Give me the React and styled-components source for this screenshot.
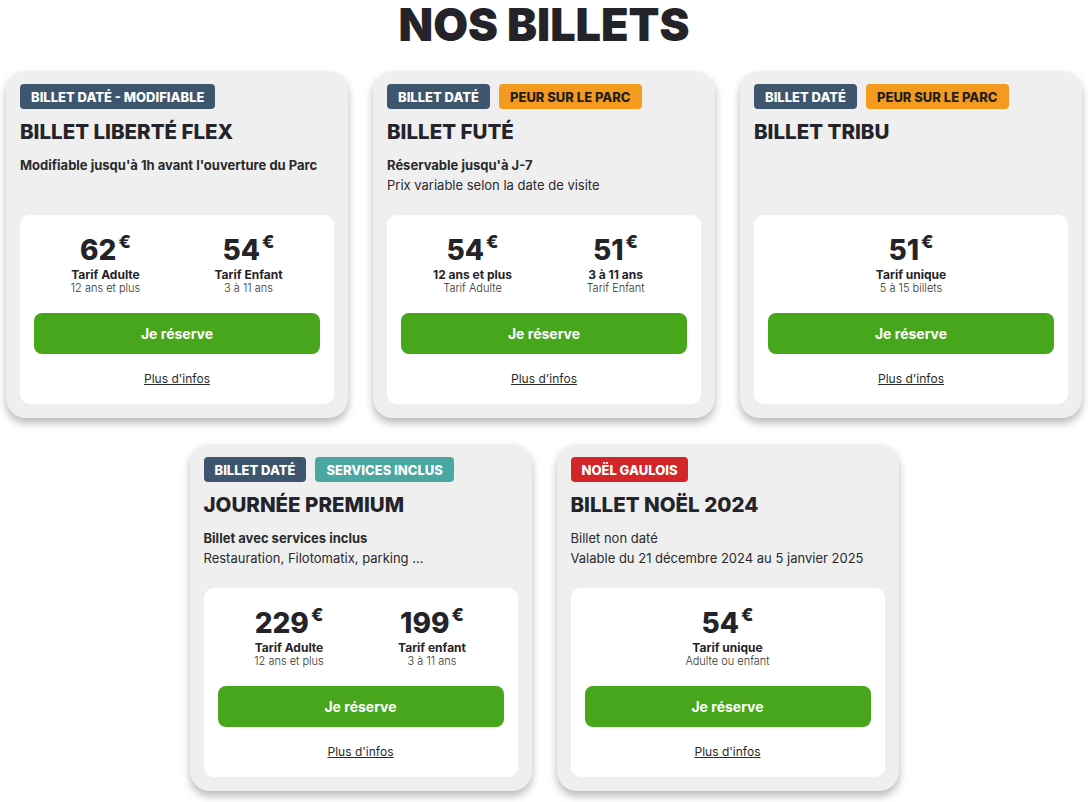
import React from "react";
import styled, { createGlobalStyle } from "styled-components";

const GlobalStyle = createGlobalStyle`
  body {
    margin: 0;
    background: #ffffff;
    font-family: "Inter", "Noto Sans", sans-serif;
    color: #25232a;
  }
`;

const badgeColors = {
  dark: { bg: "#3d566e", fg: "#ffffff" },
  orange: { bg: "#f39a1f", fg: "#1f1f1f" },
  teal: { bg: "#4aa7a2", fg: "#ffffff" },
  red: { bg: "#d3262a", fg: "#ffffff" },
};

const Page = styled.main`
  display: flex;
  flex-direction: column;
  align-items: center;
  padding-bottom: 20px;
`;

const Heading = styled.h1`
  margin: 0 0 21px;
  font-size: 45px;
  line-height: 50px;
  font-weight: 900;
  color: #25232a;
`;

const Row = styled.div`
  display: flex;
  justify-content: center;
  gap: 25px;
  margin-bottom: 26px;
`;

const Card = styled.article`
  width: 342px;
  height: 347px;
  box-sizing: border-box;
  padding: 13px 14px 14px;
  background: #efefef;
  border-radius: 20px;
  box-shadow: 0 5px 8px rgba(0, 0, 0, 0.28);
  display: flex;
  flex-direction: column;
`;

const Top = styled.div`
  flex: 1;
`;

const Badges = styled.div`
  display: flex;
  gap: 9px;
`;

const Badge = styled.span`
  height: 25px;
  display: inline-flex;
  align-items: center;
  padding: 0 11px;
  border-radius: 4px;
  font-size: 13px;
  font-weight: 800;
  text-transform: uppercase;
  background: ${(p) => badgeColors[p.$tone].bg};
  color: ${(p) => badgeColors[p.$tone].fg};
`;

const Title = styled.h2`
  margin: 10px 0 0;
  font-size: 20.5px;
  line-height: 26px;
  font-weight: 800;
  text-transform: uppercase;
  color: #25232a;
`;

const Desc = styled.div`
  margin-top: 10px;
  font-size: 13px;
  line-height: 20px;
  color: #2a2a2a;
`;

const DescStrong = styled.div`
  font-weight: 700;
`;

const Inner = styled.div`
  flex: none;
  height: 189px;
  box-sizing: border-box;
  background: #ffffff;
  border-radius: 10px;
  padding: 18px 14px 16px;
  display: flex;
  flex-direction: column;
  align-items: stretch;
`;

const Prices = styled.div`
  display: grid;
  grid-template-columns: repeat(${(p) => p.$cols}, 1fr);
`;

const Price = styled.div`
  display: flex;
  flex-direction: column;
  align-items: center;
`;

const Amount = styled.div`
  height: 34px;
  font-size: 28px;
  line-height: 34px;
  font-weight: 800;
  color: #25232a;
`;

const Euro = styled.sup`
  font-size: 18px;
  line-height: 0;
  font-weight: 800;
  vertical-align: 12px;
  margin-left: 2px;
`;

const PriceLabel = styled.div`
  font-size: 12px;
  line-height: 15px;
  font-weight: 700;
  color: #25232a;
`;

const PriceSub = styled.div`
  font-size: 11px;
  line-height: 13px;
  font-weight: 300;
  color: #333;
`;

const Button = styled.button`
  flex: none;
  margin-top: 18px;
  height: 41px;
  border: none;
  border-radius: 8px;
  background: #47a61c;
  color: #ffffff;
  font-family: inherit;
  font-size: 14px;
  font-weight: 700;
  cursor: pointer;
`;

const More = styled.a`
  margin-top: 16px;
  align-self: center;
  font-size: 12px;
  line-height: 18px;
  color: #2a2a2a;
  text-decoration: underline;
  cursor: pointer;
`;

const rows = [
  [
    {
      badges: [["Billet daté - modifiable", "dark"]],
      title: "Billet Liberté Flex",
      strong: "Modifiable jusqu'à 1h avant l'ouverture du Parc",
      lines: [],
      prices: [
        ["62", "Tarif Adulte", "12 ans et plus"],
        ["54", "Tarif Enfant", "3 à 11 ans"],
      ],
    },
    {
      badges: [
        ["Billet daté", "dark"],
        ["Peur sur le parc", "orange"],
      ],
      title: "Billet Futé",
      strong: "Réservable jusqu'à J-7",
      lines: ["Prix variable selon la date de visite"],
      prices: [
        ["54", "12 ans et plus", "Tarif Adulte"],
        ["51", "3 à 11 ans", "Tarif Enfant"],
      ],
    },
    {
      badges: [
        ["Billet daté", "dark"],
        ["Peur sur le parc", "orange"],
      ],
      title: "Billet Tribu",
      lines: [],
      prices: [["51", "Tarif unique", "5 à 15 billets"]],
    },
  ],
  [
    {
      badges: [
        ["Billet daté", "dark"],
        ["Services inclus", "teal"],
      ],
      title: "Journée Premium",
      strong: "Billet avec services inclus",
      lines: ["Restauration, Filotomatix, parking ..."],
      prices: [
        ["229", "Tarif Adulte", "12 ans et plus"],
        ["199", "Tarif enfant", "3 à 11 ans"],
      ],
    },
    {
      badges: [["Noël Gaulois", "red"]],
      title: "Billet Noël 2024",
      lines: ["Billet non daté", "Valable du 21 décembre 2024 au 5 janvier 2025"],
      prices: [["54", "Tarif unique", "Adulte ou enfant"]],
    },
  ],
];

function TicketCard({ ticket }) {
  return (
    <Card>
      <Top>
        <Badges>
          {ticket.badges.map(([label, tone]) => (
            <Badge key={label} $tone={tone}>
              {label}
            </Badge>
          ))}
        </Badges>
        <Title>{ticket.title}</Title>
        <Desc>
          {ticket.strong && <DescStrong>{ticket.strong}</DescStrong>}
          {ticket.lines.map((line) => (
            <div key={line}>{line}</div>
          ))}
        </Desc>
      </Top>
      <Inner>
        <Prices $cols={ticket.prices.length}>
          {ticket.prices.map(([amount, label, sub]) => (
            <Price key={label}>
              <Amount>
                {amount}
                <Euro>€</Euro>
              </Amount>
              <PriceLabel>{label}</PriceLabel>
              <PriceSub>{sub}</PriceSub>
            </Price>
          ))}
        </Prices>
        <Button>Je réserve</Button>
        <More>Plus d'infos</More>
      </Inner>
    </Card>
  );
}

export default function App() {
  return (
    <>
      <GlobalStyle />
      <Page>
        <Heading>NOS BILLETS</Heading>
        {rows.map((row, i) => (
          <Row key={i}>
            {row.map((ticket) => (
              <TicketCard key={ticket.title} ticket={ticket} />
            ))}
          </Row>
        ))}
      </Page>
    </>
  );
}
